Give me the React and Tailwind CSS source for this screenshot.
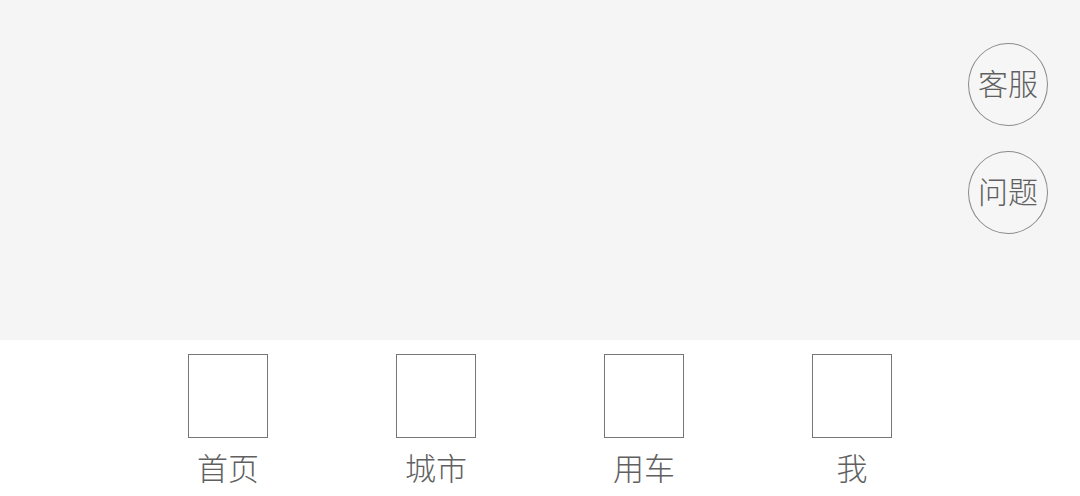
import React from "react";

const tabs = ["首页", "城市", "用车", "我"];
const floats = ["客服", "问题"];

export default function App() {
  return (
    <div
      className="w-[1080px] h-[496px] flex flex-col bg-white"
      style={{ fontFamily: '"Noto Sans CJK SC", "Noto Sans", sans-serif' }}
    >
      {/* main area */}
      <div className="h-[340px] bg-[#f5f5f5] flex flex-col items-end pt-[43px] pr-[32px] gap-[25px]">
        {floats.map((label) => (
          <div
            key={label}
            className="w-[80px] h-[83px] rounded-[50%] border border-[#8a8a8a] bg-[#f6f6f6] flex items-center justify-center pb-[6px] text-[30px] font-light leading-none text-[#606060]"
          >
            {label}
          </div>
        ))}
      </div>

      {/* tab bar */}
      <div className="flex-1 flex justify-center pt-[14px]">
        <div className="w-[832px] grid grid-cols-4">
          {tabs.map((label) => (
            <div key={label} className="flex flex-col items-center">
              <div className="w-[80px] h-[84px] border border-[#777]" />
              <span className="mt-[6px] text-[31px] font-light leading-[46px] text-[#606060]">
                {label}
              </span>
            </div>
          ))}
        </div>
      </div>
    </div>
  );
}
